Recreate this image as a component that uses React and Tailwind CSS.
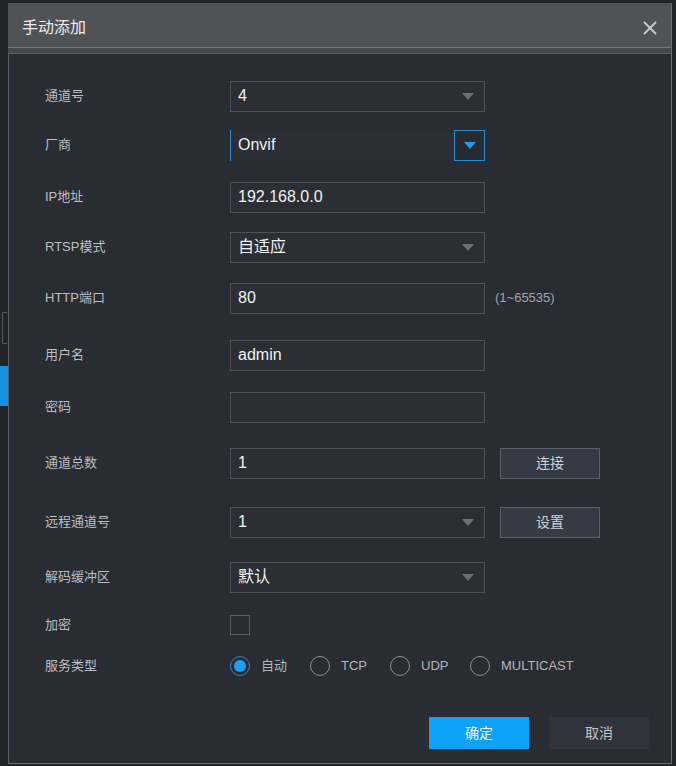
import React from 'react';

const font = { fontFamily: '"Liberation Sans", "Noto Sans CJK SC", sans-serif' };

const Arrow = ({ color = '#6b6e74' }) => (
  <svg width="12" height="7" viewBox="0 0 12 7">
    <path d="M0 0 L12 0 L6 7 Z" fill={color} />
  </svg>
);

const Row = ({ label, mt, children }) => (
  <div className={`flex items-center h-[32px] ${mt}`}>
    <div className="w-[185px] shrink-0 text-[13px] text-[#bdbec2]">{label}</div>
    <div className="flex items-center">{children}</div>
  </div>
);

const Field = ({ value, arrow }) => (
  <div className="flex items-center justify-between w-[255px] h-[31px] border border-[#4d5057] bg-[#2b2e35] px-[7px]">
    <span className="text-[16px] text-[#f2f2f2]">{value}</span>
    {arrow && <span className="mr-[3px]"><Arrow /></span>}
  </div>
);

const SideButton = ({ children }) => (
  <button className="ml-[15px] w-[100px] h-[31px] border border-[#5b5f68] bg-[#363a44] text-[14px] text-[#cfd0d4]">
    {children}
  </button>
);

const Radio = ({ label, checked, last }) => (
  <div className={`flex items-center shrink-0 ${last ? '' : 'w-[80px]'}`}>
    <span className={`flex shrink-0 items-center justify-center w-[20px] h-[20px] rounded-full border ${checked ? 'border-[#2a86c0]' : 'border-[#8d8f94]'}`}>
      {checked && <span className="w-[12px] h-[12px] rounded-full bg-[#1f9ff0]" />}
    </span>
    <span className="ml-[11px] whitespace-nowrap text-[13px] text-[#b4b5b9]">{label}</span>
  </div>
);

export default function App() {
  return (
    <div className="relative w-[676px] h-[766px] bg-[#222428] overflow-hidden" style={font}>
      {/* bits of the page under the dialog */}
      <div className="absolute left-0 top-[366px] w-[8px] h-[40px] bg-[#1690e0]" />
      <div className="absolute left-[2px] top-[312px] w-[5px] h-[32px] border-l border-t border-b border-[#55585e]" />
      <div className="absolute right-0 top-[300px] w-[5px] h-[40px] border-l border-[#55585e]" />

      <div className="absolute left-[8px] top-[3px] w-[664px] h-[761px] flex flex-col border-r border-b border-[#6a6c71]">
        <div className="flex items-center justify-between h-[45px] bg-[#505256] pl-[14px] pr-[14px] pt-[5px] border-b border-[#74767a]">
          <span className="text-[16px] text-[#ececec]">手动添加</span>
          <svg width="14" height="14" viewBox="0 0 14 14">
            <path d="M1 1 L13 13 M13 1 L1 13" stroke="#c9cacd" strokeWidth="1.8" />
          </svg>
        </div>
        <div className="h-[5px] bg-[#46484d]" />
        <div className="flex-1 flex flex-col bg-[#2a2c33] border-t border-l border-[#5c5e63] pl-[36px] pt-[26px]">
          <Row label="通道号" mt="">
            <Field value="4" arrow />
          </Row>
          <Row label="厂商" mt="mt-[17px]">
            <div className="flex items-center w-[255px] h-[31px] bg-[#2b2e35]">
              <div className="flex-1 h-full flex items-center border-l border-[#2a8ccc] px-[7px]">
                <span className="text-[16px] text-[#f2f2f2]">Onvif</span>
              </div>
              <div className="w-[31px] h-full flex items-center justify-center border border-[#2a8ccc] bg-[#262a31]">
                <Arrow color="#2a9be0" />
              </div>
            </div>
          </Row>
          <Row label="IP地址" mt="mt-[20px]">
            <Field value="192.168.0.0" />
          </Row>
          <Row label="RTSP模式" mt="mt-[18px]">
            <Field value="自适应" arrow />
          </Row>
          <Row label="HTTP端口" mt="mt-[19px]">
            <Field value="80" />
            <span className="ml-[10px] text-[13px] text-[#a3a4a8]">(1~65535)</span>
          </Row>
          <Row label="用户名" mt="mt-[25px]">
            <Field value="admin" />
          </Row>
          <Row label="密码" mt="mt-[20px]">
            <Field value="" />
          </Row>
          <Row label="通道总数" mt="mt-[24px]">
            <Field value="1" />
            <SideButton>连接</SideButton>
          </Row>
          <Row label="远程通道号" mt="mt-[27px]">
            <Field value="1" arrow />
            <SideButton>设置</SideButton>
          </Row>
          <Row label="解码缓冲区" mt="mt-[23px]">
            <Field value="默认" arrow />
          </Row>
          <Row label="加密" mt="mt-[16px]">
            <span className="w-[20px] h-[20px] border border-[#5c5e63]" />
          </Row>
          <Row label="服务类型" mt="mt-[9px]">
            <Radio label="自动" checked />
            <Radio label="TCP" />
            <Radio label="UDP" />
            <Radio label="MULTICAST" last />
          </Row>
          <div className="flex justify-end gap-[20px] mt-[35px] pr-[22px]">
            <button className="w-[100px] h-[32px] bg-[#0ea2f9] text-[14px] text-[#eef7ff]">确定</button>
            <button className="w-[100px] h-[32px] bg-[#30333b] text-[14px] text-[#c3c4c8]">取消</button>
          </div>
        </div>
      </div>
    </div>
  );
}
